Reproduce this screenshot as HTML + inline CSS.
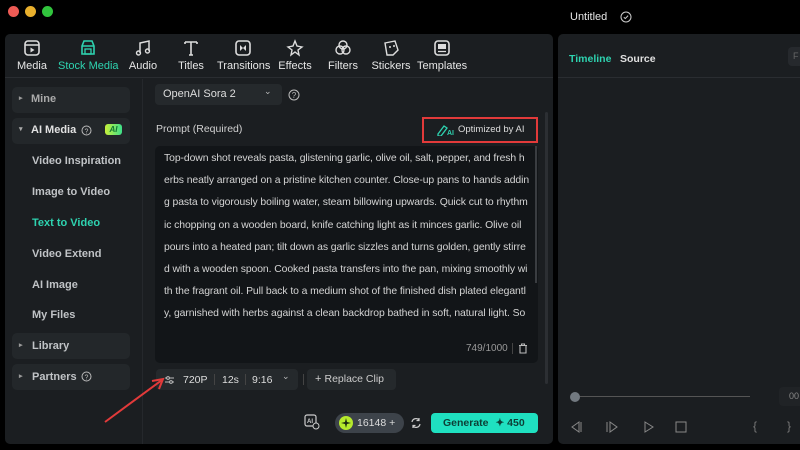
<!DOCTYPE html>
<html><head><meta charset="utf-8"><style>
*{box-sizing:border-box;margin:0;padding:0}
body{width:800px;height:450px;background:#000;font-family:"Liberation Sans",sans-serif;position:relative;overflow:hidden;color:#d8d8d8}
.abs{position:absolute}
.dot{position:absolute;top:6px;width:11px;height:11px;border-radius:50%}
.panel{left:5px;top:34px;width:548px;height:410px;background:#1b1e21;border-radius:5px;overflow:hidden}
.tb{position:absolute;left:0;top:0;width:548px;height:44px;border-bottom:1px solid #2a2d31}
.ti{position:absolute;top:5px;text-align:center;font-size:11px;color:#e6e6e6;white-space:nowrap}
.ti svg{display:block;margin:0 auto 3px}
.side{position:absolute;font-size:11px;font-weight:bold;color:#c0c3c6;white-space:nowrap}
.grp{position:absolute;left:7px;width:118px;height:26px;background:#23272a;border-radius:5px}
.ln{position:absolute;left:164px;font-size:10.4px;color:#d4d4d4;white-space:nowrap;letter-spacing:-0.08px}
</style></head><body>
<div class="dot" style="left:8px;background:#ee5b55"></div>
<div class="dot" style="left:25px;background:#e9b02d"></div>
<div class="dot" style="left:42px;background:#31c43d"></div>
<div class="abs" style="left:570px;top:11px;font-size:11px;color:#e8e8e8">Untitled</div>
<svg class="abs" style="left:620px;top:11px" width="12" height="12"><circle cx="6" cy="6" r="5" fill="none" stroke="#ccc" stroke-width="1"/><path d="M3.8 6.2l1.5 1.4 2.8-3" fill="none" stroke="#ccc" stroke-width="1"/></svg>

<div class="abs panel">
 <div class="tb">
  <div class="ti" style="left:12px;width:30px"><svg width="18" height="18"><rect x="2" y="2" width="14" height="14" rx="3" fill="none" stroke="#ddd" stroke-width="1.6"/><path d="M2 6h14" stroke="#ddd" stroke-width="1.4"/><path d="M7.5 8.5l4 2.5-4 2.5z" fill="#ddd"/></svg>Media</div>
  <div class="ti" style="left:53px;width:60px;color:#2ed3b0"><svg width="18" height="18"><path d="M3 7l2-5h8l2 5v8H3z" fill="none" stroke="#2ed3b0" stroke-width="1.6"/><path d="M3 7h12" stroke="#2ed3b0" stroke-width="1.4"/><rect x="6" y="10" width="6" height="5" fill="none" stroke="#2ed3b0" stroke-width="1.3"/></svg>Stock Media</div>
  <div class="ti" style="left:123px;width:30px"><svg width="18" height="18"><path d="M6 14V4l9-2v10" fill="none" stroke="#ddd" stroke-width="1.5"/><circle cx="4.5" cy="14" r="2" fill="none" stroke="#ddd" stroke-width="1.4"/><circle cx="13.5" cy="12" r="2" fill="none" stroke="#ddd" stroke-width="1.4"/></svg>Audio</div>
  <div class="ti" style="left:170px;width:32px"><svg width="18" height="18"><path d="M3 3h12M9 3v13M3 3v2M15 3v2M7 16h4" fill="none" stroke="#ddd" stroke-width="1.6"/></svg>Titles</div>
  <div class="ti" style="left:212px;width:52px"><svg width="18" height="18"><rect x="2" y="2" width="14" height="14" rx="3" fill="none" stroke="#ddd" stroke-width="1.6"/><path d="M6 6l3 3-3 3zM12 6l-3 3 3 3z" fill="#ddd"/></svg>Transitions</div>
  <div class="ti" style="left:272px;width:36px"><svg width="18" height="18"><path d="M9 2l2 5 5 1-4 3 1 5-4-3-4 3 1-5-4-3 5-1z" fill="none" stroke="#ddd" stroke-width="1.4"/></svg>Effects</div>
  <div class="ti" style="left:322px;width:32px"><svg width="18" height="18"><circle cx="9" cy="6" r="4" fill="none" stroke="#ddd" stroke-width="1.4"/><circle cx="6" cy="11" r="4" fill="none" stroke="#ddd" stroke-width="1.4"/><circle cx="12" cy="11" r="4" fill="none" stroke="#ddd" stroke-width="1.4"/></svg>Filters</div>
  <div class="ti" style="left:366px;width:40px"><svg width="18" height="18"><path d="M3 4l10-2 3 9-5 5-6 0z" fill="none" stroke="#ddd" stroke-width="1.4"/><circle cx="8" cy="8" r="1" fill="#ddd"/><circle cx="12" cy="7" r="1" fill="#ddd"/></svg>Stickers</div>
  <div class="ti" style="left:412px;width:50px"><svg width="18" height="18"><rect x="2" y="2" width="14" height="14" rx="3" fill="none" stroke="#ddd" stroke-width="1.6"/><rect x="5" y="5" width="8" height="5" fill="#ddd"/><path d="M5 12.5h8" stroke="#ddd" stroke-width="1.3"/></svg>Templates</div>
 </div>
 <div class="abs" style="left:137px;top:45px;width:1px;height:365px;background:#25282c"></div>
 <div class="grp" style="top:53px"></div>
 <div class="side" style="left:14px;top:60px;color:#999;font-size:7px">▸</div>
 <div class="side" style="left:26px;top:59px;color:#aaa">Mine</div>
 <div class="grp" style="top:84px"></div>
 <div class="side" style="left:14px;top:91px;font-size:7px;color:#aaa">▾</div>
 <div class="side" style="left:26px;top:90px;color:#e2e2e2">AI Media</div>
 <svg class="abs" style="left:76px;top:91px" width="11" height="11"><circle cx="5.5" cy="5.5" r="4.5" fill="none" stroke="#bbb"/><text x="5.5" y="8.3" font-size="7" fill="#bbb" text-anchor="middle" font-family="Liberation Sans">?</text></svg>
 <div class="abs" style="left:100px;top:90px;width:17px;height:11px;border-radius:3px;background:linear-gradient(90deg,#c8f03a,#3de08a);font-size:8px;font-weight:bold;font-style:italic;color:#173;text-align:center;line-height:11px">AI</div>
 <div class="side" style="left:27px;top:121px">Video Inspiration</div>
 <div class="side" style="left:27px;top:152px">Image to Video</div>
 <div class="side" style="left:27px;top:183px;color:#2ed3b0">Text to Video</div>
 <div class="side" style="left:27px;top:214px">Video Extend</div>
 <div class="side" style="left:27px;top:245px">AI Image</div>
 <div class="side" style="left:27px;top:275px">My Files</div>
 <div class="grp" style="top:299px"></div>
 <div class="side" style="left:14px;top:307px;font-size:7px;color:#999">▸</div>
 <div class="side" style="left:27px;top:306px">Library</div>
 <div class="grp" style="top:330px"></div>
 <div class="side" style="left:14px;top:338px;font-size:7px;color:#999">▸</div>
 <div class="side" style="left:27px;top:337px">Partners</div>
 <svg class="abs" style="left:76px;top:337px" width="11" height="11"><circle cx="5.5" cy="5.5" r="4.5" fill="none" stroke="#bbb"/><text x="5.5" y="8.3" font-size="7" fill="#bbb" text-anchor="middle" font-family="Liberation Sans">?</text></svg>
</div>

<div class="abs" style="left:155px;top:84px;width:127px;height:21px;background:#25292c;border-radius:4px"></div>
<div class="abs" style="left:163px;top:88px;font-size:11px;color:#ddd">OpenAI Sora 2</div>
<div class="abs" style="left:264px;top:86px;font-size:9px;color:#bbb">⌄</div>
<svg class="abs" style="left:288px;top:89px" width="12" height="12"><circle cx="6" cy="6" r="5" fill="none" stroke="#bbb"/><text x="6" y="9" font-size="8" fill="#bbb" text-anchor="middle" font-family="Liberation Sans">?</text></svg>
<div class="abs" style="left:156px;top:123px;font-size:10.5px;color:#d0d0d0">Prompt (Required)</div>
<div class="abs" style="left:422px;top:117px;width:116px;height:26px;border:2px solid #e23a3a"></div>
<svg class="abs" style="left:436px;top:123px" width="20" height="13"><path d="M2 11l6-8 3 2-6 8H2z" fill="none" stroke="#2ed3b0" stroke-width="1.3"/><text x="11" y="12" font-size="7" font-weight="bold" fill="#2ed3b0" font-family="Liberation Sans">AI</text></svg>
<div class="abs" style="left:458px;top:124px;font-size:9.5px;color:#ddd">Optimized by AI</div>
<div class="abs" style="left:155px;top:146px;width:383px;height:217px;background:#121518;border-radius:5px"></div>
<div class="abs" style="left:535px;top:146px;width:2px;height:137px;background:#3a3d41"></div>
<div class="abs" style="left:545px;top:112px;width:3px;height:272px;background:#2c2f33;border-radius:2px"></div>
<div class="ln" style="top:153px">Top-down shot reveals pasta, glistening garlic, olive oil, salt, pepper, and fresh h</div>
<div class="ln" style="top:175px">erbs neatly arranged on a pristine kitchen counter. Close-up pans to hands addin</div>
<div class="ln" style="top:197px">g pasta to vigorously boiling water, steam billowing upwards. Quick cut to rhythm</div>
<div class="ln" style="top:220px">ic chopping on a wooden board, knife catching light as it minces garlic. Olive oil</div>
<div class="ln" style="top:242px">pours into a heated pan; tilt down as garlic sizzles and turns golden, gently stirre</div>
<div class="ln" style="top:264px">d with a wooden spoon. Cooked pasta transfers into the pan, mixing smoothly wi</div>
<div class="ln" style="top:286px">th the fragrant oil. Pull back to a medium shot of the finished dish plated elegantl</div>
<div class="ln" style="top:308px">y, garnished with herbs against a clean backdrop bathed in soft, natural light. So</div>
<div class="abs" style="left:466px;top:343px;font-size:10px;color:#999">749/1000</div>
<div class="abs" style="left:512px;top:343px;width:1px;height:11px;background:#444"></div>
<svg class="abs" style="left:518px;top:343px" width="10" height="11"><path d="M1 2.5h8M3.5 2.5V1h3v1.5M2 3v7h6V3" fill="none" stroke="#bbb" stroke-width="1.1"/></svg>

<div class="abs" style="left:156px;top:369px;width:142px;height:21px;background:#25292c;border-radius:4px"></div>
<svg class="abs" style="left:164px;top:375px" width="11" height="10"><path d="M1 3h9M1 7h9" stroke="#bbb"/><circle cx="4" cy="3" r="1.4" fill="#25292c" stroke="#bbb"/><circle cx="7" cy="7" r="1.4" fill="#25292c" stroke="#bbb"/></svg>
<div class="abs" style="left:183px;top:374px;font-size:10.5px;color:#ddd">720P</div>
<div class="abs" style="left:214px;top:374px;width:1px;height:11px;background:#444"></div>
<div class="abs" style="left:222px;top:374px;font-size:10.5px;color:#ddd">12s</div>
<div class="abs" style="left:245px;top:374px;width:1px;height:11px;background:#444"></div>
<div class="abs" style="left:252px;top:374px;font-size:10.5px;color:#ddd">9:16</div>
<div class="abs" style="left:282px;top:371px;font-size:9px;color:#bbb">⌄</div>
<div class="abs" style="left:303px;top:374px;width:1px;height:11px;background:#444"></div>
<div class="abs" style="left:307px;top:369px;width:89px;height:21px;background:#25292c;border-radius:4px"></div>
<div class="abs" style="left:315px;top:373px;font-size:11px;color:#ccc">+ <span style="font-size:10.5px">Replace Clip</span></div>
<svg class="abs" style="left:100px;top:375px" width="70" height="50"><path d="M5 47L62 5" stroke="#e23a3a" stroke-width="2"/><path d="M52 6l11-2-4 10" fill="none" stroke="#e23a3a" stroke-width="2"/></svg>

<svg class="abs" style="left:304px;top:414px" width="16" height="16"><rect x="1" y="1" width="11" height="11" rx="2" fill="none" stroke="#ccc" stroke-width="1.2"/><text x="3" y="9" font-size="6" fill="#ccc" font-family="Liberation Sans" font-weight="bold">AI</text><circle cx="12" cy="12" r="3" fill="#1b1e21" stroke="#ccc"/></svg>
<div class="abs" style="left:335px;top:413px;width:69px;height:20px;background:#3d434a;border-radius:10px"></div>
<div class="abs" style="left:339px;top:416px;width:14px;height:14px;border-radius:50%;background:#b6ea2c"></div>
<svg class="abs" style="left:341px;top:418px" width="10" height="10"><path d="M5 0L6 4 10 5 6 6 5 10 4 6 0 5 4 4z" fill="#1b2a10"/></svg>
<div class="abs" style="left:357px;top:417px;font-size:10.5px;color:#ddd">16148 +</div>
<svg class="abs" style="left:410px;top:417px" width="12" height="12"><path d="M2 5a4 4 0 0 1 7-2M10 7a4 4 0 0 1-7 2" fill="none" stroke="#ccc" stroke-width="1.2"/><path d="M9 1v2.5H6.5M3 11V8.5h2.5" fill="none" stroke="#ccc" stroke-width="1.2"/></svg>
<div class="abs" style="left:431px;top:413px;width:107px;height:20px;background:#1fe0c0;border-radius:4px;color:#0d3d35;font-size:10.5px;font-weight:bold;line-height:20px;padding-left:12px">Generate <span style="margin-left:4px">✦</span> 450</div>

<div class="abs" style="left:558px;top:34px;width:250px;height:410px;background:#1b1e21;border-radius:5px"></div>
<div class="abs" style="left:558px;top:77px;width:242px;height:1px;background:#2a2d31"></div>
<div class="abs" style="left:569px;top:53px;font-size:10.5px;font-weight:bold;color:#2ed3b0">Timeline</div>
<div class="abs" style="left:620px;top:53px;font-size:10.5px;font-weight:bold;color:#e0e0e0">Source</div>
<div class="abs" style="left:788px;top:47px;width:20px;height:19px;background:#26292d;border-radius:4px;font-size:9px;color:#666;padding:4px 0 0 5px">F</div>
<div class="abs" style="left:575px;top:396px;width:175px;height:1px;background:#555"></div>
<div class="abs" style="left:570px;top:392px;width:10px;height:10px;border-radius:50%;background:#727980"></div>
<div class="abs" style="left:779px;top:387px;width:30px;height:19px;background:#202326;border-radius:4px;font-size:9px;color:#888;padding:4px 0 0 10px">00</div>
<svg class="abs" style="left:570px;top:420px" width="130" height="14"><path d="M9 2L2 7l7 5zM11 2v10" fill="none" stroke="#888" stroke-width="1"/><path d="M37 2v10M40 2l7 5-7 5z" fill="none" stroke="#888" stroke-width="1"/><path d="M75 2l8 5-8 5z" fill="none" stroke="#888" stroke-width="1"/><rect x="106" y="2" width="10" height="10" fill="none" stroke="#888" stroke-width="1"/></svg>
<div class="abs" style="left:753px;top:419px;font-size:12px;color:#777">{</div>
<div class="abs" style="left:787px;top:419px;font-size:12px;color:#777">}</div>
</body></html>
